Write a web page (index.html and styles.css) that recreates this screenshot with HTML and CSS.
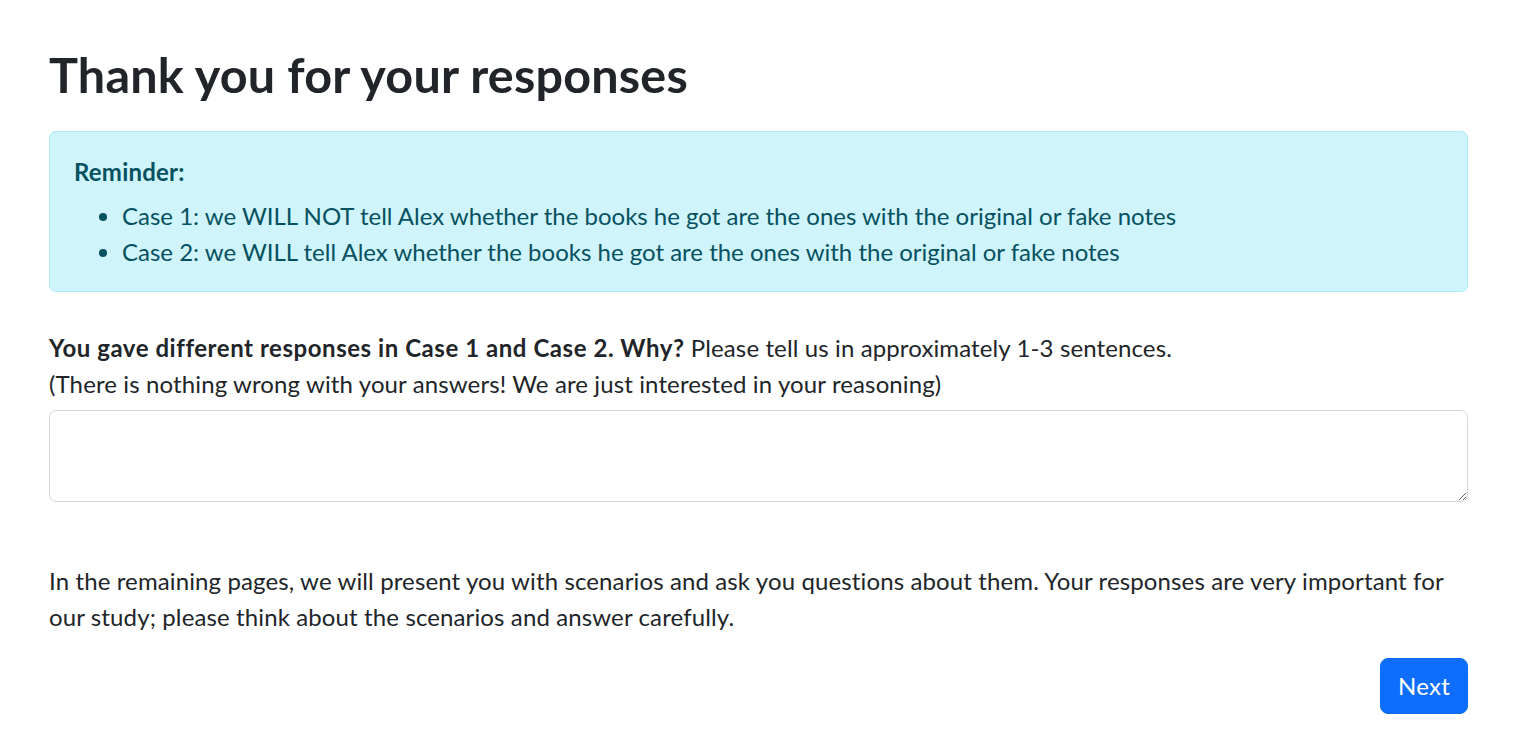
FILE: index.html
```html
<!DOCTYPE html>
<html lang="en">
<head>
<meta charset="utf-8">
<title>Thank you for your responses</title>
<link rel="stylesheet" href="styles.css">
</head>
<body>
<main class="container">
  <h1 class="title">Thank you for your responses</h1>
  <div class="alert">
    <div class="alert-heading">Reminder:</div>
    <ul class="alert-list">
      <li>Case 1: we WILL NOT tell Alex whether the books he got are the ones with the original or fake notes</li>
      <li>Case 2: we WILL tell Alex whether the books he got are the ones with the original or fake notes</li>
    </ul>
  </div>
  <label class="question" for="why"><strong>You gave different responses in Case 1 and Case 2. Why?</strong> Please tell us in approximately 1-3 sentences.<br>(There is nothing wrong with your answers! We are just interested in your reasoning)</label>
  <textarea id="why" class="answer"></textarea>
  <p class="outro">In the remaining pages, we will present you with scenarios and ask you questions about them. Your responses are very important for our study; please think about the scenarios and answer carefully.</p>
  <div class="actions">
    <button class="btn-next" type="button">Next</button>
  </div>
</main>
</body>
</html>
```

FILE: styles.css
```css
* { box-sizing: border-box; }

html, body {
  margin: 0;
  background: #ffffff;
}

body {
  font-family: "Lato", "Noto Sans", sans-serif;
  font-size: 24px;
  line-height: 36px;
  letter-spacing: 0.12px;
  color: #212529;
}

.container {
  width: 1419px;
  margin-left: 49px;
  padding-top: 38px;
  display: flex;
  flex-direction: column;
}

.title {
  margin: 0 0 21px 0;
  font-size: 48.5px;
  line-height: 72px;
  font-weight: 700;
  letter-spacing: 0.2px;
  color: #212529;
}

.alert {
  background: #cff4fc;
  border: 1px solid #a8ecfa;
  border-radius: 7px;
  color: #055160;
  padding: 22px 24px 21px 24px;
  margin-bottom: 38px;
}

.alert-heading {
  font-weight: 700;
  letter-spacing: 0.2px;
  margin-bottom: 8px;
}

.alert-list {
  margin: 0;
  padding-left: 48px;
  letter-spacing: 0;
}

.question {
  display: block;
  margin-bottom: 8px;
}

.question strong {
  font-weight: 700;
  letter-spacing: 0.55px;
}

.answer {
  display: block;
  width: 100%;
  height: 92px;
  border: 1px solid #d3d6dc;
  border-radius: 7px;
  font: inherit;
  padding: 9px 18px;
  margin: 0 0 61px 0;
}

.outro {
  margin: 0 0 23px 0;
}

.actions {
  display: flex;
  justify-content: flex-end;
}

.btn-next {
  font: inherit;
  font-size: 24px;
  line-height: 36px;
  letter-spacing: 0.3px;
  color: #ffffff;
  background: #0d6efd;
  border: 1px solid #0d6efd;
  border-radius: 8px;
  padding: 9px 0;
  width: 88px;
  height: 56px;
}
```
